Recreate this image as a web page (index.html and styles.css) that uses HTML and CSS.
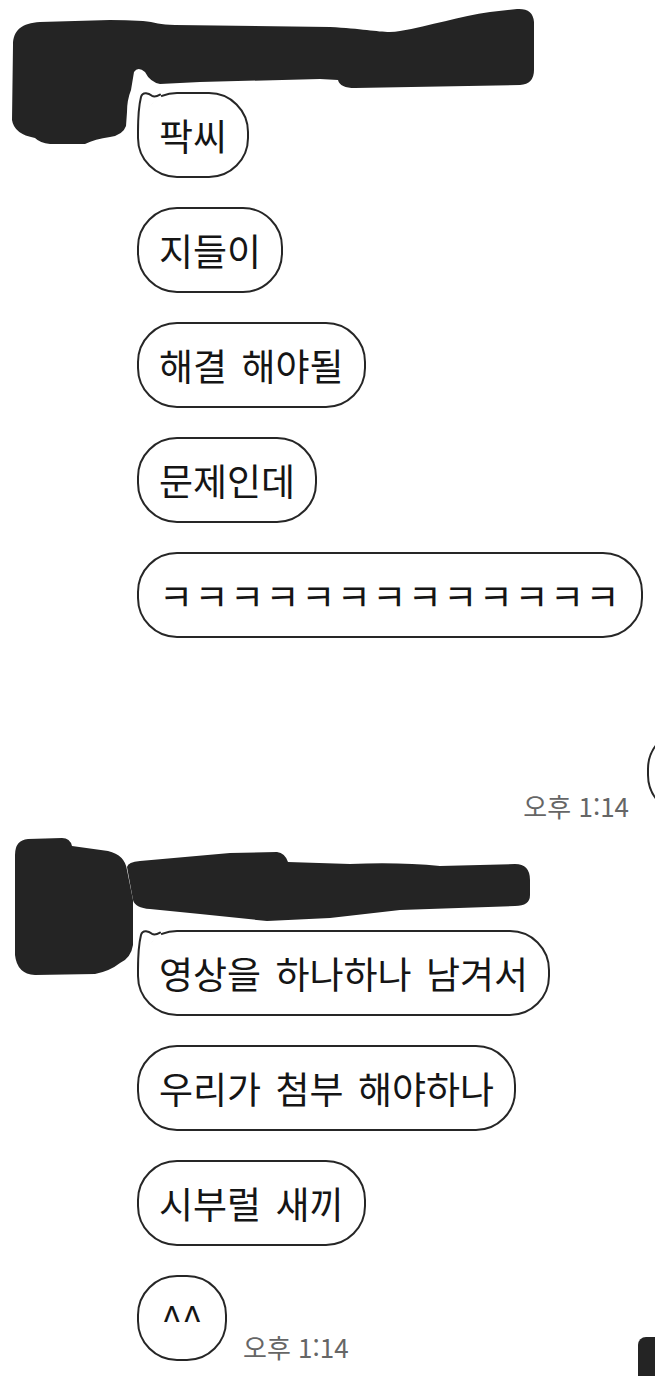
FILE: index.html
```html
<!doctype html>
<html lang="ko">
    <head>
        <meta charset="UTF-8" />
        <meta name="viewport" content="width=device-width, initial-scale=1.0" />
        <title>채팅</title>
        <link rel="stylesheet" href="styles.css">
    </head>
    <body>
        <div class="screen">
            <section class="group">
                <svg class="redact" width="540" height="150" viewBox="0 0 540 150">
                    <path d="M 13 45 C 13 30, 22 23, 40 22 L 110 20 Q 125 20, 143 21 C 155 22, 160 25, 175 25 L 330 27 C 370 29, 385 34, 400 31 C 430 26, 460 16, 490 12 L 517 9 Q 533 8, 534 22 L 534 70 Q 534 84, 520 85 L 355 88 Q 340 88, 338 80 L 320 79 L 200 82 L 160 84 Q 150 82, 145 72 Q 138 66, 134 72 L 131 90 Q 127 100, 127 112 L 126 126 Q 123 135, 110 137 Q 95 139, 85 144 L 50 144 Q 40 143, 35 138 Q 14 134, 12 120 Z" />
                </svg>
                <div class="sender"></div>
                <div class="messages">
                    <div class="bubble first">
                        <svg class="tail" width="40" height="40" viewBox="0 0 40 40">
                            <path class="tail-fill" d="M 1 40 C 1 26, 2 13, 4 5 Q 5 1, 9 1.2 Q 12 1.5, 15 3.8 Q 18 5.5, 23 2.6 L 25 6 A 37 37 0 0 0 3 40 Z" />
                            <path class="tail-line" d="M 1 40 C 1 26, 2 13, 4 5 Q 5 1, 9 1.2 Q 12 1.5, 15 3.8 Q 18 5.5, 23 2.6" />
                        </svg>
                        팍씨
                    </div>
                    <div class="bubble">지들이</div>
                    <div class="bubble">해결 해야될</div>
                    <div class="bubble">문제인데</div>
                    <div class="bubble laugh">ㅋㅋㅋㅋㅋㅋㅋㅋㅋㅋㅋㅋㅋ</div>
                </div>
            </section>

            <div class="mine">
                <span class="time">오후 1:14</span>
                <div class="bubble outgoing"></div>
            </div>

            <section class="group second">
                <svg class="redact" width="540" height="140" viewBox="0 838 540 140">
                    <ellipse class="avatar-peek" cx="108" cy="960" rx="10" ry="7" />
                    <path d="M 15 855 Q 15 840, 28 839 L 62 838 Q 70 838, 72 846 L 108 851 Q 125 855, 127 870 L 133 900 L 133 945 Q 131 958, 120 963 Q 110 971, 95 974 L 35 975 Q 17 974, 15 955 Z" />
                    <path d="M 127 867 Q 128 862, 140 861 L 230 853 L 277 852 Q 285 853, 288 862 L 350 864 Q 400 862, 440 866 L 515 864 Q 530 864, 530 880 L 530 895 Q 530 906, 515 906 L 400 910 L 330 918 L 267 921 L 200 914 L 150 909 Q 135 908, 133 900 Z" />
                </svg>
                <div class="sender"></div>
                <div class="messages">
                    <div class="bubble first">
                        <svg class="tail" width="40" height="40" viewBox="0 0 40 40">
                            <path class="tail-fill" d="M 1 40 C 1 26, 2 13, 4 5 Q 5 1, 9 1.2 Q 12 1.5, 15 3.8 Q 18 5.5, 23 2.6 L 25 6 A 37 37 0 0 0 3 40 Z" />
                            <path class="tail-line" d="M 1 40 C 1 26, 2 13, 4 5 Q 5 1, 9 1.2 Q 12 1.5, 15 3.8 Q 18 5.5, 23 2.6" />
                        </svg>
                        영상을 하나하나 남겨서
                    </div>
                    <div class="bubble">우리가 첨부 해야하나</div>
                    <div class="bubble">시부럴 새끼</div>
                    <div class="last-row">
                        <div class="bubble">^^</div>
                        <span class="time">오후 1:14</span>
                    </div>
                </div>
            </section>

            <div class="corner"></div>
        </div>
    </body>
</html>
```

FILE: styles.css
```css
* {
    margin: 0;
    padding: 0;
    box-sizing: border-box;
}

body {
    font-family: "Noto Sans CJK KR", "Noto Sans", sans-serif;
    background: white;
    color: #151515;
}

.screen {
    position: relative;
    min-height: 1376px;
    overflow: hidden;
}

.group {
    position: relative;
}

.group.second {
    margin-top: 23px;
}

.redact {
    position: absolute;
    top: 0;
    left: 0;
    fill: #242424;
    z-index: 2;
}

.avatar-peek {
    fill: #2f7fe0;
}

.sender {
    height: 92px;
}

.messages {
    display: flex;
    flex-direction: column;
    align-items: flex-start;
    gap: 29px;
    padding-left: 137px;
}

.bubble {
    position: relative;
    display: flex;
    align-items: center;
    justify-content: center;
    min-width: 90px;
    height: 86px;
    padding: 0 20px;
    border: 2px solid #262626;
    border-radius: 40px;
    background: white;
    font-size: 37px;
    line-height: 1.2;
    word-spacing: 4px;
    white-space: nowrap;
}

.bubble.laugh {
    letter-spacing: 1.5px;
}

.tail {
    position: absolute;
    top: -2px;
    left: -2px;
    overflow: visible;
}

.tail-fill {
    fill: white;
}

.tail-line {
    fill: none;
    stroke: #262626;
    stroke-width: 2;
    stroke-linecap: round;
}

.time {
    font-size: 26px;
    line-height: 1;
    color: #666;
    white-space: nowrap;
}

.mine {
    display: flex;
    justify-content: flex-end;
    align-items: flex-end;
    gap: 18px;
    margin-top: 91px;
}

.mine .time {
    margin-bottom: -4px;
}

.outgoing {
    width: 120px;
    margin-right: -112px;
}

.last-row {
    display: flex;
    align-items: flex-end;
    gap: 16px;
}

.last-row .time {
    margin-bottom: 1px;
}

.corner {
    position: absolute;
    right: 0;
    bottom: 0;
    width: 17px;
    height: 39px;
    background: #242424;
    border-top-left-radius: 8px;
}
```
